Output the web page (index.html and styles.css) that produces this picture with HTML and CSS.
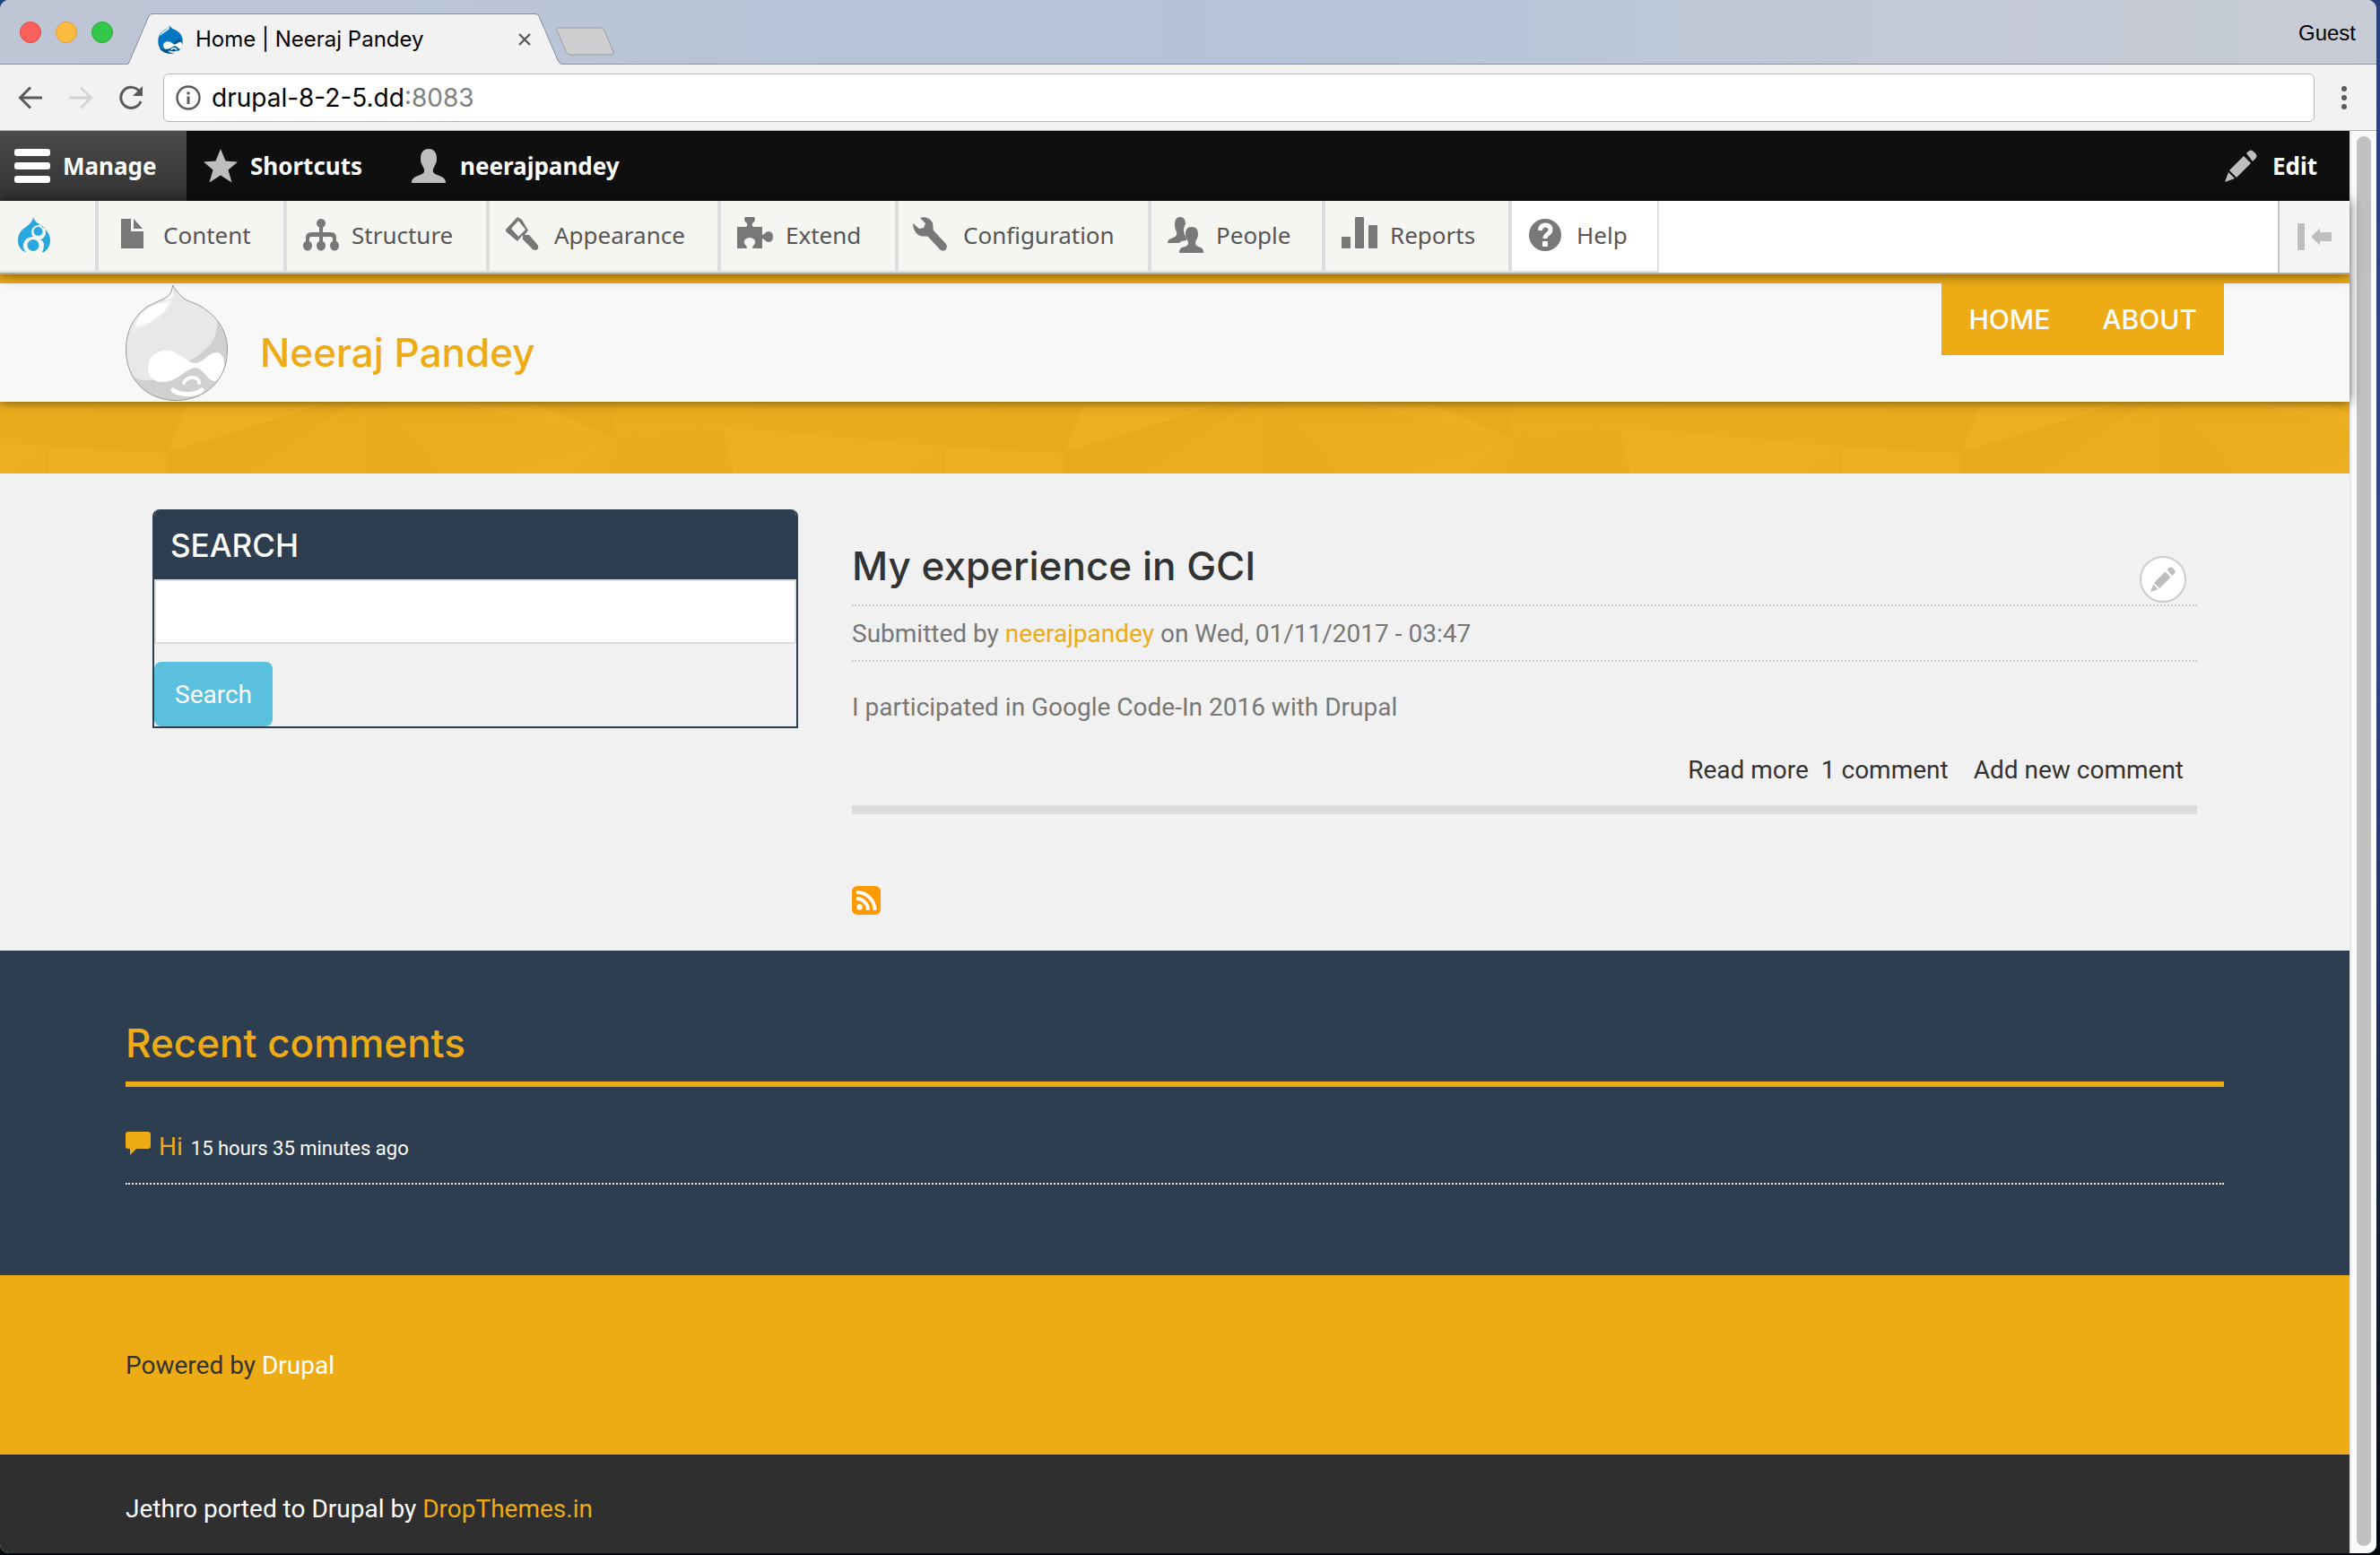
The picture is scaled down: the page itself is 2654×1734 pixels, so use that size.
FILE: index.html
```html
<!DOCTYPE html>
<html lang="en">
<head>
<meta charset="utf-8">
<title>Home | Neeraj Pandey</title>
<link rel="stylesheet" href="styles.css">
</head>
<body>
<svg class="defs" width="0" height="0" aria-hidden="true">
  <defs>
    <g id="pencil">
      <path d="M0 36 L4 25 L11 32 Z"/>
      <path d="M5 23 L21 7 L29 15 L13 31 Z"/>
      <path d="M24 4 L26 2 C28 0 30 0 32 2 L34 4 C36 6 36 8 34 10 L31 13 Z"/>
    </g>
    <g id="facets">
      <path class="facet-dark" d="M53 50 L120 0 H210 L187 57 Z"/>
      <path class="facet-light" d="M187 57 L210 0 H370 Z"/>
      <path class="facet-dark" d="M187 57 L370 0 H395 L275 80 H187 Z"/>
      <path class="facet-mid" d="M405 0 H420 L490 80 H405 Z"/>
      <path class="facet-light" d="M500 0 H590 L684 40 Z"/>
      <path class="facet-dark" d="M590 0 H686 V40 Z"/>
      <path class="facet-light" d="M684 40 L640 80 H560 Z"/>
      <path class="facet-mid" d="M684 40 L806 27 L765 80 H680 Z"/>
      <path class="facet-mid" d="M806 27 L818 80 H765 Z"/>
      <path class="facet-mid" d="M806 27 L860 0 H1120 L1053 50 Z"/>
      <path class="facet-light" d="M806 29 L1053 50 L1015 80 H818 Z"/>
      <path class="facet-light" d="M1053 50 L1187 57 V80 H1053 Z"/>
    </g>
  </defs>
</svg>
<div class="window">
  <div class="tabstrip">
    <div class="lights">
      <span class="light light-close"></span>
      <span class="light light-min"></span>
      <span class="light light-max"></span>
    </div>
    <div class="tab">
      <svg class="tab-shape" viewBox="0 0 484 57" aria-hidden="true"><path d="M0 57 C2 56 2 54 3 52 L24 3 Q25 .5 28 .5 H455 Q458 .5 459 3 L480 52 C481 54 482 56 484 57 Z" fill="#f2f2f2"/><path d="M0 56.500 C2 56 2 54 3 52 L24 3 Q25 .5 28 .5 H455 Q458 .5 459 3 L480 52 C481 54 482 56 484 56.500" fill="none" stroke="#868e99"/></svg>
      <div class="tab-body">
        <svg width="28" height="32" viewBox="0 0 114 130" aria-hidden="true">
          <path d="M52 1 C56 10 67 16 83 23 C104 35 113 52 113 73 C113 108 88 129 56 129 C24 129 1 106 1 73 C1 52 9 36 24 25 C39 18 51 13 52 1Z" fill="#0077c0"/>
          <path d="M6 103 Q20 112 45 100 L100 60 Q112 80 104 104 Q90 129 56 129 Q22 128 6 103Z" fill="#00598e"/>
          <path d="M51 4 Q58 20 40 26 Q18 38 10 52 Q10 34 34 22 Q48 16 51 4Z" fill="#e6f1f8"/>
          <path d="M25 93 C25 80 35 74 46 74 C60 74 68 87 78 87 C86 87 92 76 102 76 C107 77 110 82 110 88 C110 98 104 108 99 108 C92 108 86 95 78 95 C68 95 58 109 42 109 C31 109 25 103 25 93Z" fill="#fff"/>
          <path d="M60 112 Q73 98 86 112 M50 117 Q70 130 90 117" fill="none" stroke="#fff" stroke-width="6"/>
        </svg>
        <span class="tab-title">Home | Neeraj Pandey</span>
        <button class="tab-close" aria-label="Close tab"><svg width="14" height="14" viewBox="0 0 14 14"><path d="M1 1 L13 13 M13 1 L1 13" stroke="#5a5a5a" stroke-width="2.400"/></svg></button>
      </div>
    </div>
    <button class="new-tab" aria-label="New tab"><svg width="66" height="33" viewBox="0 0 66 33"><path d="M4 1 H50 Q53 1 54 4 L64 28 Q65 31 62 31 H16 Q13 31 12 29 L1 4 Q0 1 4 1Z" fill="#cfcfcf" stroke="#9a9da3"/></svg></button>
    <span class="guest">Guest</span>
  </div>

  <div class="addressbar">
    <div class="nav-icons">
      <button aria-label="Back"><svg width="28" height="28" viewBox="0 0 28 28"><path d="M27 14 H3 M14 2.500 L2.500 14 L14 25.500" fill="none" stroke="#5a5a5a" stroke-width="3"/></svg></button>
      <button aria-label="Forward"><svg width="28" height="28" viewBox="0 0 28 28"><path d="M1 14 H25 M14 2.500 L25.500 14 L14 25.500" fill="none" stroke="#d4d4d4" stroke-width="3"/></svg></button>
      <button aria-label="Reload"><svg width="28" height="28" viewBox="0 0 28 28"><path d="M23.500 7 A11.500 11.500 0 1 0 25 18" fill="none" stroke="#5a5a5a" stroke-width="3"/><path d="M27 1 V12 H16 Z" fill="#5a5a5a"/></svg></button>
    </div>
    <label class="omnibox">
      <svg width="28" height="28" viewBox="0 0 28 28" aria-hidden="true"><circle cx="14" cy="14" r="12.500" fill="none" stroke="#5a5a5a" stroke-width="2.400"/><path d="M12.500 7.500 h3 v3 h-3z M12.500 12.500 h3 v8.500 h-3z" fill="#5a5a5a"/></svg>
      <input class="url" type="text" value="drupal-8-2-5.dd" aria-label="Address"><span class="port">:8083</span>
    </label>
    <button class="menu" aria-label="Menu"><svg width="8" height="28" viewBox="0 0 8 28"><g fill="#5a5a5a"><circle cx="4" cy="4" r="3"/><circle cx="4" cy="14" r="3"/><circle cx="4" cy="24" r="3"/></g></svg></button>
  </div>

  <div class="viewport">
    <div class="page">
      <nav class="toolbar" aria-label="Administration">
        <a class="bar-item bar-manage" href="#"><svg width="40" height="38" viewBox="0 0 40 38" fill="#fff"><rect width="40" height="8" rx="3"/><rect y="15" width="40" height="8" rx="3"/><rect y="30" width="40" height="8" rx="3"/></svg>Manage</a>
        <a class="bar-item" href="#"><svg width="38" height="38" viewBox="0 0 38 38"><path d="M19 0 L24.500 13.500 L38 14.500 L27.500 23.500 L31.500 37.500 L19 29.500 L6.500 37.500 L10.500 23.500 L0 14.500 L13.500 13.500 Z" fill="#bebebe"/></svg>Shortcuts</a>
        <a class="bar-item bar-user" href="#"><svg width="38" height="38" viewBox="0 0 38 38"><path d="M19 0 C25 0 28 4 28 11 C28 17 25 19 24 23 C23 27 26 28 31 30 C36 32 38 34 38 38 H0 C0 34 2 32 7 30 C12 28 15 27 14 23 C13 19 10 17 10 11 C10 4 13 0 19 0Z" fill="#bebebe"/></svg>neerajpandey</a>
        <a class="bar-item bar-edit" href="#"><svg width="36" height="36" viewBox="0 0 36 36" fill="#bebebe"><use href="#pencil"/></svg>Edit</a>
      </nav>
      <nav class="tray" aria-label="Manage">
        <a class="tray-item tray-home" href="#" aria-label="Drupal"><svg width="36" height="40" viewBox="0 0 36 40"><path d="M17 0 C19 6 23 7 27 11 C33 15 36 20 36 26 C36 32 33 37 28 39.500 L27 39 C28 37 29 34 29 31 C29 28 27 26 25 25 C29 24 31 21 31 17 C31 12 27 9 23 9 C18 9 15 13 15 17 C15 19 16 21 17 22 C11 22 6 26 6 32 C6 35 7 37 9 39 L8 39 C3 37 0 32 0 26 C0 19 4 14 9 11 C13 8 16 6 17 0Z" fill="#29a8e0"/><circle cx="22.500" cy="16" r="5" fill="#29a8e0"/><circle cx="17" cy="31.500" r="6.500" fill="#29a8e0"/></svg></a>
        <a class="tray-item" href="#"><svg width="40" height="40" viewBox="0 0 40 40"><path d="M7 2 H18 V16 H32 V35 H7 Z M21 2 L31 13 H21Z"/></svg>Content</a>
        <a class="tray-item" href="#"><svg width="40" height="40" viewBox="0 0 40 40"><path d="M3 34 V23 Q3 17 9 17 H31 Q37 17 37 23 V34 H33 V24 Q33 22 31 22 H9 Q7 22 7 24 V34Z"/><path d="M18 6 H22 V34 H18Z"/><circle cx="20" cy="7" r="5"/><ellipse cx="5" cy="32" rx="5" ry="5.500"/><ellipse cx="20" cy="32" rx="5" ry="5.500"/><ellipse cx="35" cy="32" rx="5" ry="5.500"/></svg>Structure</a>
        <a class="tray-item" href="#"><svg width="40" height="40" viewBox="2 0 40 40"><path d="M15 0 L20 3 L27 15 L23 20 L28 20 C30 22 37 30 38 32 C39 35 37 37 35 37 C33 37 32 36 31 35 L21 25 V20 L15 27 L1 15 Z M16 4 L8 13 L16 22 L24 14 Z" fill-rule="evenodd"/><path d="M1 15 L15 1 L17 3 L7 12 L16 22 L13 25Z"/></svg>Appearance</a>
        <a class="tray-item" href="#"><svg width="40" height="40" viewBox="0 0 40 40"><path d="M0 11 H10 Q12 10 11 7 Q8 5 8 2 L9 0 H19 L20 2 Q20 5 17 7 Q16 10 18 11 H28 V19 Q29 21 31 18 Q35 14 39 18 Q41 22 39 26 Q35 30 31 26 Q29 23 28 25 V35 H18 Q16 34 18 32 Q22 28 19 25 Q14 21 9 25 Q6 28 10 32 Q12 34 10 35 H0Z"/></svg>Extend</a>
        <a class="tray-item" href="#"><svg width="40" height="40" viewBox="2 0 40 40" overflow="visible"><path d="M8 1 C14 -1 20 2 22 7 C23 10 22 13 23 15 L36 29 C39 32 38 35 36 37 C34 38 31 38 29 35 L17 22 C15 21 12 22 8 21 C3 19 0 13 0 7 L7 13 L12 12 L14 7 Z"/></svg>Configuration</a>
        <a class="tray-item" href="#"><svg width="40" height="40" viewBox="0 0 40 40"><path d="M14 0 C18 0 20 3 20 8 Q18 10 18 15 Q18 19 21 23 L21 26 Q14 27 13 29 H0 Q0 25 4 24 C9 22 11 21 10 17 C9 14 8 12 8 8 C8 3 10 0 14 0Z"/><path d="M27 11 C32 11 34 14 34 19 C34 24 31 26 31 29 C31 32 34 33 37 34 Q40 35 40 40 H13 Q13 35 16 34 C20 33 23 32 23 29 C23 26 20 24 20 19 C20 14 22 11 27 11Z"/></svg>People</a>
        <a class="tray-item" href="#"><svg width="40" height="40" viewBox="0 0 40 40"><rect y="22" width="10" height="13" rx="1"/><rect x="15" width="10" height="35" rx="1"/><rect x="30" y="9" width="10" height="26" rx="1"/></svg>Reports</a>
        <a class="tray-item tray-help" href="#"><svg width="40" height="40" viewBox="1 0 40 40"><circle cx="20" cy="20" r="18"/><path d="M14.500 15 Q15 9 20 9 Q26 9 26 14 Q26 17 23 19 Q20 21 20 24" fill="none" stroke="#fff" stroke-width="5"/><rect x="17" y="27" width="6" height="6" rx="1" fill="#fff"/></svg>Help</a>
        <span class="tray-space"></span>
        <button class="tray-toggle" aria-label="Vertical orientation"><svg width="38" height="30" viewBox="0 0 38 30" fill="#bebebe"><rect width="8" height="30" rx="1"/><path d="M15 15 L25 5.500 V10 H38 V20 H25 V24.500Z"/></svg></button>
      </nav>

      <header class="site-header">
        <div class="container header-row">
          <a class="brand" href="#">
            <svg width="114" height="130" viewBox="0 0 114 130" aria-hidden="true">
              <path d="M52.500 1 C57 8 62 14 67 17 C72 20 78 21 83 24 C103 36 113.500 52 113.500 73 C113.500 108 88 129.500 56 129.500 C24 129.500 .5 106 .5 73 C.5 52 9 36 24 25 C30 22 36 19 41 17 C50 13 52 8 52.500 1Z" fill="#e8e8e8"/>
              <path d="M102 40 C110 50 113 62 113 73 C113 108 88 129 56 129 C34 129 17 119 8 103 C16 108 24 107 31 107 L72 85 C94 72 103 60 102 40Z" fill="#d0d0d0"/>
              <path d="M9 49 C12 36 32 20 52 17 C49 32 24 48 9 50Z" fill="#f3f3f3"/>
              <path d="M12 44 C14 32 32 20 46 20 C52 26 26 46 14 46Z M52 3 C54 10 54 14 51 16 L42 18 Q52 13 52 3Z" fill="#fff"/>
              <path d="M25 93 C25 80 35 74 46 74 C60 74 68 88 78 88 C86 88 92 76 102 76 C107 77 110 82 110 88 C110 98 104 108 99 108 C92 108 86 93 78 93 C68 93 58 109 42 109 C31 109 25 103 25 93Z" fill="#fff"/>
              <path d="M65 110 C68 102 82 102 82 110" fill="none" stroke="#fff" stroke-width="4" stroke-linecap="round"/>
              <path d="M53 118 C60 124 78 124 85 118" fill="none" stroke="#fff" stroke-width="5" stroke-linecap="round"/>
              <path d="M52.500 1 C57 8 62 14 67 17 C72 20 78 21 83 24 C103 36 113.500 52 113.500 73 C113.500 108 88 129.500 56 129.500 C24 129.500 .5 106 .5 73 C.5 52 9 36 24 25 C30 22 36 19 41 17 C50 13 52 8 52.500 1Z" fill="none" stroke="#999"/>
            </svg>
            <span class="site-name">Neeraj Pandey</span>
          </a>
          <nav class="main-nav" aria-label="Main">
            <a href="#">HOME</a>
            <a href="#">ABOUT</a>
          </nav>
        </div>
      </header>
      <svg class="banner" aria-hidden="true"><use href="#facets" x="-1000"/><use href="#facets"/><use href="#facets" x="1000"/><use href="#facets" x="2000"/></svg>

      <main class="main">
        <div class="container columns">
          <form class="search-box">
            <h2><label for="q">SEARCH</label></h2>
            <input id="q" type="search">
            <button type="button">Search</button>
          </form>
          <div class="content">
            <article>
              <h2>My experience in GCI</h2>
              <button class="contextual" aria-label="Configure"><svg width="28" height="28" viewBox="0 0 36 36" fill="#bebebe"><use href="#pencil"/></svg></button>
              <p class="submitted">Submitted by <a href="#">neerajpandey</a> on Wed, 01/11/2017 - 03:47</p>
              <p class="body">I participated in Google Code-In 2016 with Drupal</p>
              <div class="links">
                <a href="#">Read more</a>
                <a href="#">1 comment</a>
                <a class="add" href="#">Add new comment</a>
              </div>
            </article>
            <a class="feed" href="#" aria-label="Subscribe"><svg width="32" height="32" viewBox="0 0 32 32"><rect width="32" height="32" rx="6" fill="#f90"/><circle cx="8.500" cy="23.500" r="3.200" fill="#fff"/><path d="M5 14 A13 13 0 0 1 18 27 M5 7 A20 20 0 0 1 25.500 27" fill="none" stroke="#fff" stroke-width="4"/></svg></a>
          </div>
        </div>
      </main>

      <section class="recent">
        <div class="container">
          <h2>Recent comments</h2>
          <p class="comment"><svg width="28" height="26" viewBox="0 0 28 26" aria-hidden="true"><path d="M3 0 H25 Q28 0 28 3 V16 Q28 19 25 19 H12 L5 26 V19 H3 Q0 19 0 16 V3 Q0 0 3 0Z" fill="#edab16"/></svg><a href="#">Hi</a> <span class="ago">15 hours 35 minutes ago</span></p>
        </div>
      </section>
      <footer>
        <div class="powered"><div class="container">Powered by <a href="#">Drupal</a></div></div>
        <div class="credit"><div class="container">Jethro ported to Drupal by <a href="#">DropThemes.in</a></div></div>
      </footer>
    </div>
    <div class="scrollbar"><div class="thumb"></div></div>
  </div>
</div>
</body>
</html>
```

FILE: styles.css
```css
* { box-sizing: border-box; }

body {
  margin: 0;
  min-height: 100vh;
  display: flex;
  padding: 0 4px 2px 0;
  background: linear-gradient(#25437a, #2d4a82 40%, #1a2c50 70%, #05080f);
  font-family: Roboto, sans-serif;
  font-size: 28px;
  line-height: 40px;
  color: #777;
}

h2, p { margin: 0; font-weight: 500; }
p { font-weight: 400; }
a { color: #edab16; text-decoration: none; }
button { padding: 0; border: 0; background: none; font: inherit; }
svg { display: block; flex: none; }
.defs { position: absolute; }

.window {
  flex: 1;
  display: flex;
  flex-direction: column;
  border-radius: 10px;
  overflow: hidden;
  background: #f2f2f2;
}

/* Browser chrome */
.tabstrip {
  height: 72px;
  display: flex;
  align-items: flex-end;
  padding-left: 22px;
  background: linear-gradient(90deg, #bec6d5, #b5c3d8 50%, #b9c6d8 65%, #c3c9d5 80%, #c7ccd6);
  border-bottom: 1px solid #8e949c;
}
.lights { display: flex; gap: 16px; align-self: center; width: 120px; }
.light { width: 24px; height: 24px; border-radius: 50%; border: 1px solid; }
.light-close { background: #fc605b; border-color: #df4744; }
.light-min { background: #fdbc40; border-color: #de9f34; }
.light-max { background: #34c84a; border-color: #27aa35; }
.tab { display: grid; width: 484px; height: 57px; margin-bottom: -1px; }
.tab-shape, .tab-body { grid-area: 1 / 1; }
.tab-body {
  z-index: 1;
  display: flex;
  align-items: center;
  padding: 0 34px;
  color: #000;
}
.tab-title { flex: 1; padding-left: 14px; font: 24px/32px Inter, sans-serif; }
.new-tab { margin: 0 0 8px -6px; }
.guest {
  margin-left: auto;
  padding: 2px 23px 0 0;
  align-self: center;
  font: 24px/32px "Liberation Sans", sans-serif;
  color: #000;
}

.addressbar {
  height: 74px;
  display: flex;
  align-items: center;
  border-bottom: 1px solid #b2b5b2;
  background: #f2f2f2;
}
.nav-icons { display: flex; gap: 28px; padding: 0 22px 0 20px; }
.omnibox {
  flex: 1;
  height: 54px;
  display: flex;
  align-items: center;
  padding-left: 13px;
  border: 1px solid #b6b6b6;
  border-radius: 6px;
  background: #fff;
  font: 28px/40px Inter, sans-serif;
}
.url {
  field-sizing: content;
  margin-left: 12px;
  padding: 0;
  border: 0;
  font: inherit;
  color: #000;
}
.port { color: #808080; }
.menu { padding: 0 32px 0 29px; }

.viewport { flex: 1; display: flex; }
.page { flex: 1; display: flex; flex-direction: column; }
.scrollbar {
  width: 30px;
  display: flex;
  padding: 6px 6px 8px;
  background: #fafafa;
  border-left: 2px solid #e8e8e8;
}
.thumb { flex: 1; border-radius: 8px; background: #c1c1c1; }

/* Administration toolbar */
.toolbar {
  height: 78px;
  display: flex;
  background: #0f0f0f;
  font: bold 26px/36px "Noto Sans", sans-serif;
}
.bar-item { display: flex; align-items: center; gap: 14px; padding: 0 36px 0 19px; color: #fff; }
.bar-manage { width: 208px; padding: 0 0 0 16px; background: linear-gradient(#4a4a4a, #333); }
.bar-user { gap: 16px; }
.bar-edit { margin-left: auto; gap: 17px; }

.tray {
  position: relative;
  z-index: 2;
  display: grid;
  grid-template-columns: 108px 210px 226px 258px 198px 282px 194px 208px 166px 1fr 80px;
  height: 82px;
  background: #fff;
  border-bottom: 2px solid #a6a8aa;
  box-shadow: 0 0 14px rgba(0, 0, 0, .6);
  font: 26px/36px "Noto Sans", sans-serif;
}
.tray-item {
  display: flex;
  align-items: center;
  gap: 14px;
  padding: 0 0 2px 18px;
  color: #565656;
  fill: #787878;
  background: #f5f5f2;
  border: 2px solid #ddd;
  border-top: 0;
}
.tray-home { border-left: 0; padding-left: 20px; }
.tray-help { background: #fff; }
.tray-toggle {
  display: grid;
  place-items: center;
  border-left: 2px solid #c4c4c4;
  background: #f5f5f5;
}

/* Site */
.container { width: calc(100% - 280px); margin: 0 auto; }
.site-header {
  position: relative;
  z-index: 1;
  border-top: 10px solid #edab16;
  background: #f8f8f8;
  box-shadow: 0 0 12px rgba(0, 0, 0, .6);
}
.header-row { display: flex; justify-content: space-between; height: 132px; }
.brand { display: flex; align-items: center; gap: 36px; }
.site-name { padding-top: 22px; font: 500 44px/48px Inter, sans-serif; }
.main-nav {
  height: 80px;
  display: flex;
  align-items: center;
  gap: 58px;
  padding: 0 30px;
  background: #edab16;
  font: 500 30px/40px Inter, sans-serif;
}
.main-nav a { color: #fff; }
.banner { width: 100%; height: 80px; background: #ebad1e; }
.facet-dark { fill: #e7aa1c; }
.facet-mid { fill: #eaac1e; }
.facet-light { fill: #edaf21; }

.main { flex: 532 0 auto; padding-top: 40px; background: #f1f1f1; }
.columns {
  display: grid;
  grid-template-columns: 720fr 1500fr;
  gap: 60px;
  padding: 0 30px;
  align-items: start;
}
.search-box { border: 2px solid #2d3e50; border-top: 0; border-radius: 8px 8px 0 0; overflow: hidden; }
.search-box h2 {
  padding: 20px 18px 18px;
  background: #2d3e50;
  color: #fff;
  font: 500 35px/40px Inter, sans-serif;
}
.search-box input {
  display: block;
  width: 100%;
  height: 72px;
  margin-bottom: 20px;
  border: 2px solid #ddd;
  background: #fff;
}
.search-box button {
  display: block;
  padding: 17px 23px 15px;
  border-radius: 8px;
  background: #5bc0de;
  color: #fff;
}

article { position: relative; border-bottom: 10px solid #ddd; }
article h2 { padding: 39px 0 19px; font: 500 44px/48px Inter, sans-serif; color: #333; }
.contextual {
  position: absolute;
  top: 52px;
  right: 12px;
  width: 52px;
  height: 52px;
  display: grid;
  place-items: center;
  border: 2px solid #ccc;
  border-radius: 50%;
  background: #fff;
}
.submitted {
  padding: 11px 0 9px;
  border-top: 2px dotted #ccc;
  border-bottom: 2px dotted #ccc;
}
.body { padding: 31px 0 30px; }
.links { display: flex; justify-content: flex-end; gap: 14px; padding: 0 15px 19px 0; }
.links a { color: #333; }
.links .add { padding-left: 14px; }
.feed { display: block; width: 32px; margin-top: 80px; }

.recent { min-height: 362px; padding-top: 79px; background: #2d3e50; color: #fff; }
.recent h2 {
  padding-bottom: 19px;
  border-bottom: 6px solid #edab16;
  font: 500 44px/48px Inter, sans-serif;
  color: #edab16;
}
.comment { display: flex; align-items: baseline; gap: 9px; padding: 47px 0 18px; border-bottom: 2px dotted #e6e8ea; }
.ago { font-size: 22px; }

.powered { padding: 81px 0 79px; background: #edab16; color: #333; }
.powered a { color: #fff; }
.credit { padding: 41px 0 29px; background: #2f2f2f; color: #fff; }
```
